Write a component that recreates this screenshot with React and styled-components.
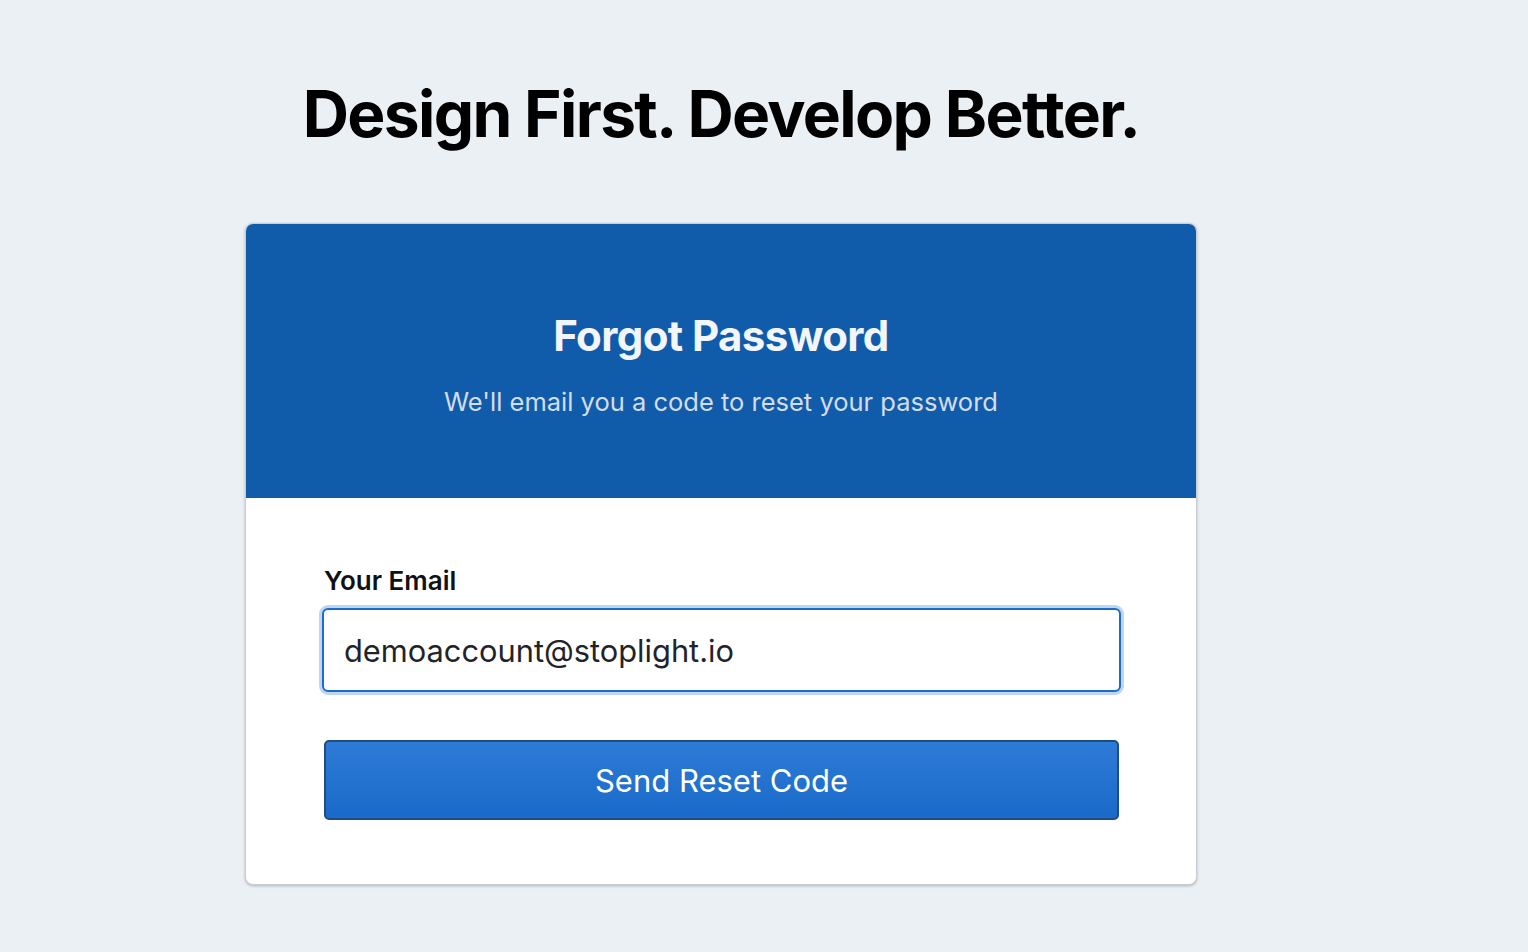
import React, { useState } from "react";
import styled, { createGlobalStyle } from "styled-components";

const GlobalStyle = createGlobalStyle`
  html, body {
    margin: 0;
    padding: 0;
    background: #ebf0f4;
    font-family: Inter, "Noto Sans", "Liberation Sans", sans-serif;
  }
`;

export default function App() {
  const [email, setEmail] = useState("demoaccount@stoplight.io");

  return (
    <Page>
      <GlobalStyle />
      <Column>
        <Headline>Design First. Develop Better.</Headline>
        <Card>
          <CardHeader>
            <CardTitle>Forgot Password</CardTitle>
            <CardSubtitle>We'll email you a code to reset your password</CardSubtitle>
          </CardHeader>
          <CardBody>
            <Field>
              <Label htmlFor="email">Your Email</Label>
              <Input
                id="email"
                type="email"
                value={email}
                onChange={(e) => setEmail(e.target.value)}
              />
            </Field>
            <SubmitButton type="button">Send Reset Code</SubmitButton>
          </CardBody>
        </Card>
      </Column>
    </Page>
  );
}

const Page = styled.div`
  min-height: 952px;
  padding: 0 0 0 245px;
  box-sizing: border-box;
`;

const Column = styled.div`
  width: 952px;
  display: flex;
  flex-direction: column;
  align-items: center;
`;

const Headline = styled.h1`
  margin: 75px 0 0;
  font-size: 64px;
  line-height: 78px;
  font-weight: 700;
  letter-spacing: -1.65px;
  color: #000;
`;

const Card = styled.div`
  margin-top: 70px;
  width: 100%;
  box-sizing: border-box;
  background: #fff;
  border: 1px solid #c9ced4;
  border-radius: 8px;
  overflow: hidden;
  box-shadow: 0 1px 3px rgba(0, 0, 0, 0.25);
`;

const CardHeader = styled.div`
  height: 274px;
  background: #115caa;
  display: flex;
  flex-direction: column;
  align-items: center;
  justify-content: center;
  padding-top: 6px;
  box-sizing: border-box;
`;

const CardTitle = styled.h2`
  margin: 0;
  font-size: 42px;
  line-height: 50px;
  font-weight: 700;
  letter-spacing: -0.6px;
  color: #f2f5f9;
`;

const CardSubtitle = styled.p`
  margin: 25px 0 0;
  font-size: 25.5px;
  line-height: 32px;
  color: #d3dce8;
`;

const CardBody = styled.div`
  padding: 68px 77px 64px 78px;
  display: flex;
  flex-direction: column;
  gap: 48px;
`;

const Field = styled.div`
  display: flex;
  flex-direction: column;
  gap: 12px;
`;

const Label = styled.label`
  font-size: 26px;
  line-height: 30px;
  font-weight: 600;
  color: #111;
`;

const Input = styled.input`
  height: 84px;
  margin: 0 -2px;
  box-sizing: border-box;
  padding: 0 20px;
  border: 2px solid #1c6ccc;
  border-radius: 6px;
  box-shadow: 0 0 0 3px #c0d5ef;
  font-family: inherit;
  font-size: 30.8px;
  color: #1f2429;
  background: #fff;
  outline: none;
`;

const SubmitButton = styled.button`
  height: 80px;
  border: 2px solid #1d4c87;
  border-radius: 5px;
  background: linear-gradient(#2e7bd6, #196ac9);
  color: #fff;
  font-family: inherit;
  font-size: 31px;
  cursor: pointer;
`;
